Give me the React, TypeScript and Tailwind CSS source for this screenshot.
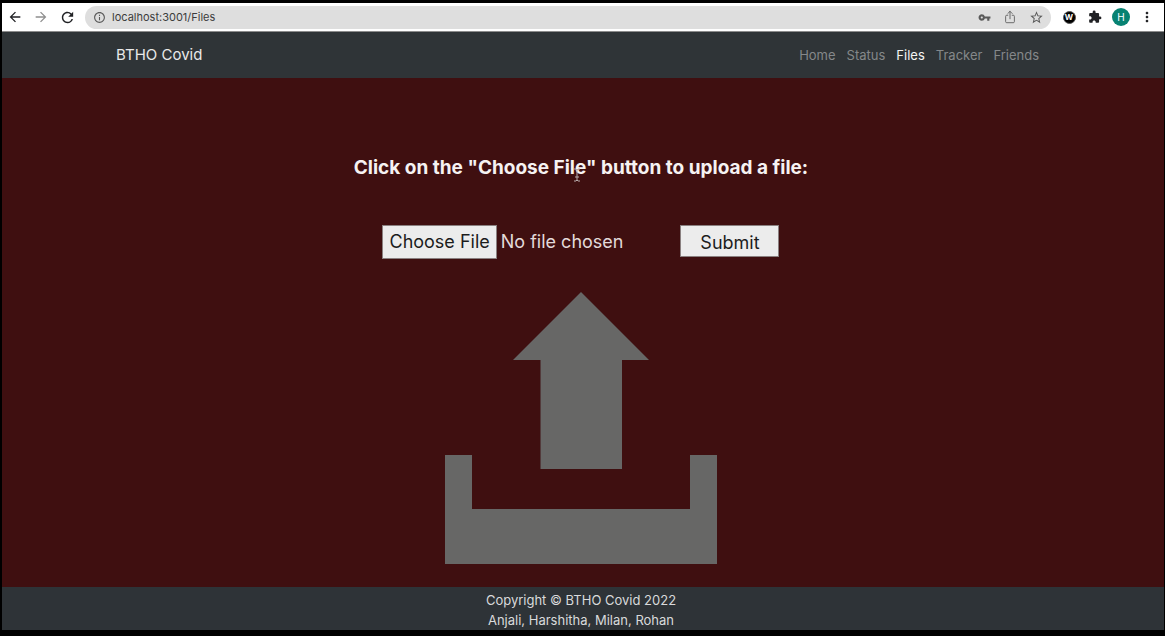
import { useState } from "react";
import {
  MdArrowBack,
  MdArrowForward,
  MdExtension,
  MdInfoOutline,
  MdMoreVert,
  MdRefresh,
  MdStarBorder,
  MdVpnKey,
} from "react-icons/md";
import { IoShareOutline } from "react-icons/io5";

const NAV_LINKS = ["Home", "Status", "Files", "Tracker", "Friends"];

const iconButton =
  "flex size-[26px] shrink-0 items-center justify-center cursor-pointer";

function BrowserBar() {
  const [url, setUrl] = useState("localhost:3001/Files");

  return (
    <div className="flex h-[29px] items-center border-b border-[#8c8c8c] bg-white pr-1 text-[#202124]">
      <button aria-label="Back" className={iconButton}>
        <MdArrowBack size={16} />
      </button>
      <button aria-label="Forward" className={`${iconButton} text-[#8f8f8f]`}>
        <MdArrowForward size={16} />
      </button>
      <button aria-label="Reload" className={iconButton}>
        <MdRefresh size={17} />
      </button>
      <div className="mx-[5px] flex h-[23px] flex-1 items-center rounded-full bg-[#dedede] pr-0.5 pl-2 text-[#5a5a5a]">
        <MdInfoOutline size={13} className="shrink-0" />
        <input
          type="text"
          aria-label="Address"
          value={url}
          onChange={(e) => setUrl(e.target.value)}
          className="ml-1.5 min-w-0 flex-1 bg-transparent text-[11px] text-[#3c3c3c] outline-none"
        />
        <button aria-label="Passwords" className={iconButton}>
          <MdVpnKey size={13} />
        </button>
        <button aria-label="Share" className={iconButton}>
          <IoShareOutline size={14} />
        </button>
        <button aria-label="Bookmark" className={iconButton}>
          <MdStarBorder size={15} />
        </button>
      </div>
      <button aria-label="W extension" className={iconButton}>
        <span className="flex size-[13px] items-center justify-center rounded-full border border-[#555555] bg-black text-[8px] leading-none font-bold text-white">
          W
        </span>
      </button>
      <button aria-label="Extensions" className={iconButton}>
        <MdExtension size={14} />
      </button>
      <button aria-label="Profile" className={iconButton}>
        <span className="flex size-[18px] items-center justify-center rounded-full bg-[#078272] text-[10px] leading-none text-white">
          H
        </span>
      </button>
      <button aria-label="Menu" className={iconButton}>
        <MdMoreVert size={16} />
      </button>
    </div>
  );
}

function Navbar() {
  return (
    <nav className="flex h-[46px] items-center justify-between bg-[#2f3437] pt-px pr-[125px] pl-[114px]">
      <a href="#" className="text-[15px] text-[#e8e9e9]">
        BTHO Covid
      </a>
      <ul className="flex gap-[11px] text-[13px]">
        {NAV_LINKS.map((link) => (
          <li key={link}>
            <a
              href={`#${link}`}
              className={link === "Files" ? "text-[#f4f4f4]" : "text-[#85888a]"}
            >
              {link}
            </a>
          </li>
        ))}
      </ul>
    </nav>
  );
}

function TextCursor() {
  return (
    <svg
      viewBox="0 0 8 14"
      className="pointer-events-none absolute top-3 left-[219px] h-[14px] w-2"
      fill="none"
    >
      <path d="M1 1h2l1 1 1-1h2M4 2v10M1 13h2l1-1 1 1h2M2 9h4" stroke="#b9acac" />
    </svg>
  );
}

function UploadForm() {
  return (
    <form
      onSubmit={(e) => e.preventDefault()}
      className="flex flex-col items-center"
    >
      <label
        htmlFor="file"
        className="relative text-[19px] leading-6 font-bold text-[#f6f2f2]"
      >
        Click on the "Choose File" button to upload a file:
        <TextCursor />
      </label>
      <div className="mt-[45px] flex items-start">
        <input
          id="file"
          type="file"
          className="w-[298px] text-lg leading-[34px] text-[#e3dada] file:mr-1 file:h-[34px] file:border file:border-solid file:border-[#8a8080] file:bg-[#ececec] file:px-1.5 file:text-lg file:text-[#1c1c1c]"
        />
        <button
          type="submit"
          className="h-8 w-[99px] cursor-pointer border border-[#8a8080] bg-[#ececec] pt-1 text-lg leading-none text-[#1c1c1c]"
        >
          Submit
        </button>
      </div>
    </form>
  );
}

function UploadIcon() {
  return (
    <svg viewBox="0 0 272 272" className="mt-[33px] size-[272px]" fill="#676766">
      <path d="M136 0 204 68H177V177H95.500V68H68Z" />
      <path d="M0 163H27V217H245V163H272V272H0Z" />
    </svg>
  );
}

export default function App() {
  return (
    <div className="flex min-h-screen flex-col border-t-[3px] border-r border-b-[6px] border-l-2 border-black bg-[#3f0f10] font-['Inter','Liberation_Sans',sans-serif]">
      <BrowserBar />
      <Navbar />
      <main className="flex flex-1 flex-col items-center pt-[78px] pr-1 pb-[22px]">
        <UploadForm />
        <UploadIcon />
      </main>
      <footer className="bg-[#2e3337] pt-[3px] pr-1 text-center text-[13px] leading-5 text-[#d9dadb]">
        <p>Copyright © BTHO Covid 2022</p>
        <p>Anjali, Harshitha, Milan, Rohan</p>
      </footer>
    </div>
  );
}
